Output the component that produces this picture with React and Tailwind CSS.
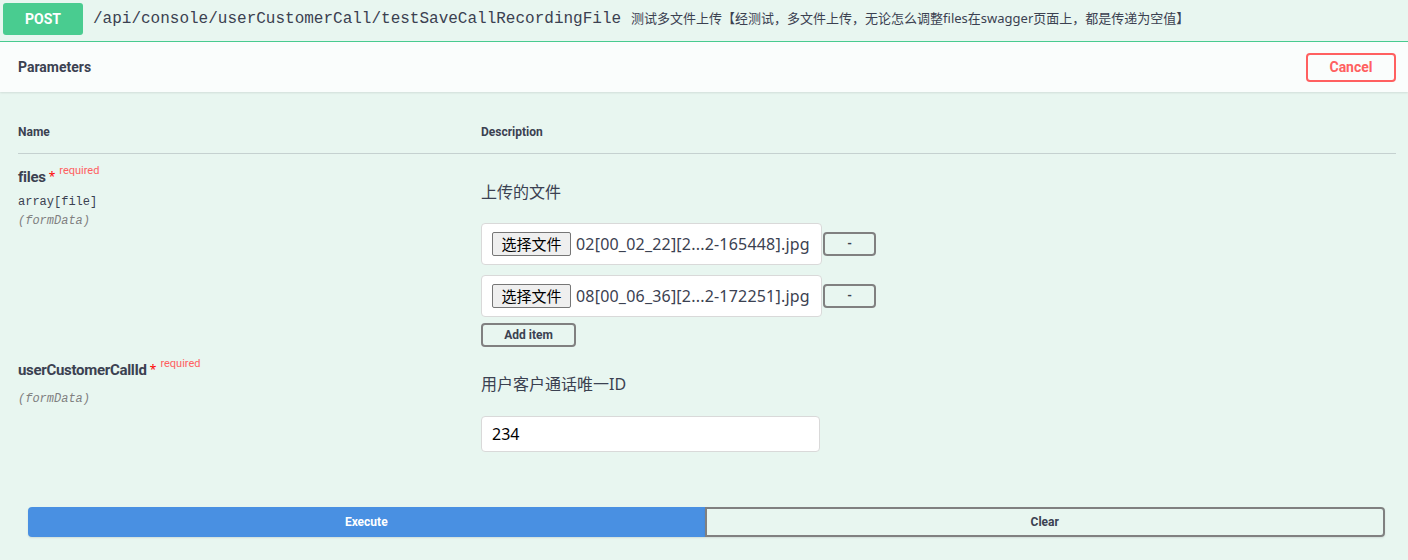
import React from "react"

// Titillium-like headings fall back to Roboto, CJK via Noto
const head = "font-['Roboto','Noto_Sans_CJK_SC',sans-serif]"
const body = "font-['Noto_Sans','Noto_Sans_CJK_SC',sans-serif]"
const mono = "font-['Liberation_Mono','DejaVu_Sans_Mono',monospace]"

function FileItem({ name }) {
    return (
        <div className="flex items-center">
            <div className="w-[341px] h-[42px] bg-white border border-[#d9d9d9] rounded-[4px] flex items-center pl-[10px]">
                <span className={`h-[24px] w-[79px] border border-[#767676] bg-[#efefef] rounded-[2px] text-[15px] text-black flex items-center justify-center ${body}`}>选择文件</span>
                <span className={`ml-[5px] text-[16px] tracking-[0.2px] text-[#3b4151] whitespace-nowrap ${body}`}>{name}</span>
            </div>
            <button className={`ml-[1px] w-[53px] h-[24px] border-2 border-[#808080] rounded-[4px] text-[12px] font-bold text-[#3b4151] flex items-center justify-center ${head}`}>-</button>
        </div>
    )
}

function ParamName({ name, type }) {
    return (
        <div className="text-[#3b4151]">
            <div className="flex items-start h-[20px]">
                <span className={`text-[15px] tracking-[-0.3px] font-bold leading-[22px] ${head}`}>{name}</span>
                <span className="text-[#ff0000] text-[12px] ml-[3px] mt-[4px] leading-[14px]">*</span>
                <span className={`text-[#ff6060] text-[11px] ml-[4px] -mt-[2px] leading-[14px] ${head}`}>required</span>
            </div>
            {type && <div className={`text-[12px] mt-[9px] leading-[14px] ${mono}`}>{type}</div>}
        </div>
    )
}

export default function App() {
    return (
        <div className="w-full h-[560px] bg-[#e8f6f0] overflow-hidden text-[#3b4151]">

            {/* summary */}
            <div className="flex items-center pt-[3px] pb-[6px] pl-[3px] border-b border-b-[#49cc90]">
                <span className={`w-[80px] h-[32px] bg-[#49cc90] rounded-[3px] text-white text-[14px] font-bold flex items-center justify-center ${head}`}>POST</span>
                <span className={`ml-[10px] text-[16px] text-[#3b4151] ${mono}`}>/api/console/userCustomerCall/testSaveCallRecordingFile</span>
                <span className={`ml-[10px] text-[13px] text-[#3b4151] ${body}`}>测试多文件上传【经测试，多文件上传，无论怎么调整files在swagger页面上，都是传递为空值】</span>
            </div>

            {/* section header */}
            <div className="h-[50px] bg-white/80 shadow-[0_1px_2px_rgba(0,0,0,0.1)] flex items-center justify-between pl-[18px] pr-[12px]">
                <span className={`text-[14px] font-bold ${head}`}>Parameters</span>
                <button className={`w-[90px] h-[29px] border-2 border-[#ff6060] rounded-[4px] text-[#ff6060] text-[14px] font-bold ${head}`}>Cancel</button>
            </div>

            {/* table */}
            <div className="pl-[18px] pr-[12px]">
                <div className={`flex pt-[32px] pb-[13px] border-b border-[#3b4151]/20 text-[12px] font-bold leading-[16px] ${head}`}>
                    <div className="w-[463px]">Name</div>
                    <div>Description</div>
                </div>

                {/* files */}
                <div className="flex pb-[4px]">
                    <div className="w-[463px] pt-[12px]">
                        <ParamName name="files" type="array[file]" />
                        <div className={`text-[12px] italic text-[#808080] mt-[5px] leading-[14px] ${mono}`}>(formData)</div>
                    </div>
                    <div className="pt-[26px]">
                        <div className={`text-[16px] leading-[24px] ${body}`}>上传的文件</div>
                        <div className="mt-[19px] flex flex-col gap-[10px]">
                            <FileItem name="02[00_02_22][2...2-165448].jpg" />
                            <FileItem name="08[00_06_36][2...2-172251].jpg" />
                        </div>
                        <button className={`mt-[6px] w-[95px] h-[24px] border-2 border-[#808080] rounded-[4px] text-[12px] font-bold text-[#3b4151] ${head}`}>Add item</button>
                    </div>
                </div>

                {/* userCustomerCallId */}
                <div className="flex">
                    <div className="w-[463px] pt-[8px]">
                        <ParamName name="userCustomerCallId" />
                        <div className={`text-[12px] italic text-[#808080] mt-[13px] leading-[14px] ${mono}`}>(formData)</div>
                    </div>
                    <div className="pt-[21px]">
                        <div className={`text-[16px] leading-[24px] ${body}`}>用户客户通话唯一ID</div>
                        <div className={`mt-[20px] w-[339px] h-[36px] bg-white border border-[#d9d9d9] rounded-[4px] flex items-center pl-[10px] text-[16px] text-black ${body}`}>234</div>
                    </div>
                </div>
            </div>

            {/* execute */}
            <div className="flex pl-[28px] pr-[23px] mt-[55px]">
                <button className={`flex-1 h-[30px] bg-[#4990e2] rounded-l-[4px] text-white text-[12px] font-bold shadow-[0_1px_2px_rgba(0,0,0,0.1)] ${head}`}>Execute</button>
                <button className={`flex-1 h-[30px] border-2 border-[#808080] rounded-r-[4px] text-[#3b4151] text-[12px] font-bold shadow-[0_1px_2px_rgba(0,0,0,0.1)] ${head}`}>Clear</button>
            </div>
        </div>
    )
}
